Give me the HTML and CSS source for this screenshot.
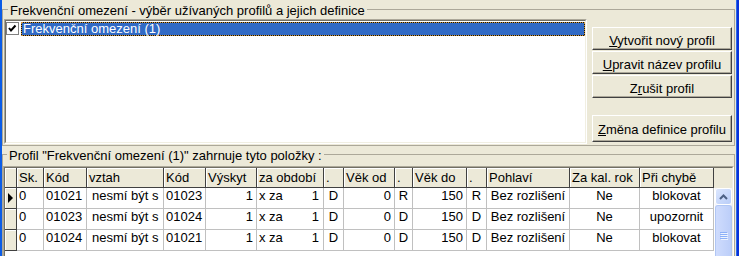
FILE: index.html
```html
<!DOCTYPE html>
<html lang="cs">
<head>
    <meta charset="UTF-8">
    <title>Frekvenční omezení</title>
    <link rel="stylesheet" href="styles.css">
</head>
<body>
    <div class="window">
        <div class="frame-left"></div>
        <div class="client">
            <fieldset class="group group-profiles">
                <legend>Frekvenční omezení - výběr užívaných profilů a jejich definice</legend>
                <div class="profiles-body">
                    <div class="listbox">
                        <div class="list-inner">
                            <div class="list-item">
                                <svg class="check" width="13" height="13" viewBox="0 0 13 13">
                                    <rect x="0.5" y="0.5" width="12" height="12" fill="#fff" stroke="#808080"/>
                                    <polyline points="3,6 5,8.5 9.5,3.5" fill="none" stroke="#000" stroke-width="2"/>
                                </svg>
                                <span class="item-text">Frekvenční omezení (1)</span>
                            </div>
                        </div>
                    </div>
                    <div class="actions">
                        <button class="btn"><u>V</u>ytvořit nový profil</button>
                        <button class="btn"><u>U</u>pravit název profilu</button>
                        <button class="btn">Z<u>r</u>ušit profil</button>
                        <button class="btn btn-last"><u>Z</u>měna definice profilu</button>
                    </div>
                </div>
            </fieldset>

            <fieldset class="group group-items">
                <legend>Profil "Frekvenční omezení (1)" zahrnuje tyto položky :</legend>
                <div class="grid">
                    <div class="grid-inner">
                        <div class="grid-head">
                            <div class="row">
                                <div class="cell hcell"></div>
                                <div class="cell hcell">Sk.</div>
                                <div class="cell hcell">Kód</div>
                                <div class="cell hcell">vztah</div>
                                <div class="cell hcell">Kód</div>
                                <div class="cell hcell">Výskyt</div>
                                <div class="cell hcell">za období</div>
                                <div class="cell hcell">.</div>
                                <div class="cell hcell">Věk od</div>
                                <div class="cell hcell">.</div>
                                <div class="cell hcell">Věk do</div>
                                <div class="cell hcell">.</div>
                                <div class="cell hcell">Pohlaví</div>
                                <div class="cell hcell">Za kal. rok</div>
                                <div class="cell hcell">Při chybě</div>
                            </div>
                            <div class="head-fill"></div>
                        </div>
                        <div class="grid-body">
                            <div class="rows">
                                <div class="row">
                                    <div class="cell indicator"><span class="arrow"></span></div>
                                    <div class="cell">0</div>
                                    <div class="cell">01021</div>
                                    <div class="cell pad">nesmí být s</div>
                                    <div class="cell">01023</div>
                                    <div class="cell right">1</div>
                                    <div class="cell split"><span>x za</span><span>1</span></div>
                                    <div class="cell center">D</div>
                                    <div class="cell right">0</div>
                                    <div class="cell center">R</div>
                                    <div class="cell right">150</div>
                                    <div class="cell center">R</div>
                                    <div class="cell center">Bez rozlišení</div>
                                    <div class="cell center">Ne</div>
                                    <div class="cell center">blokovat</div>
                                </div>
                                <div class="row">
                                    <div class="cell indicator"></div>
                                    <div class="cell">0</div>
                                    <div class="cell">01023</div>
                                    <div class="cell pad">nesmí být s</div>
                                    <div class="cell">01024</div>
                                    <div class="cell right">1</div>
                                    <div class="cell split"><span>x za</span><span>1</span></div>
                                    <div class="cell center">D</div>
                                    <div class="cell right">0</div>
                                    <div class="cell center">D</div>
                                    <div class="cell right">150</div>
                                    <div class="cell center">D</div>
                                    <div class="cell center">Bez rozlišení</div>
                                    <div class="cell center">Ne</div>
                                    <div class="cell center">upozornit</div>
                                </div>
                                <div class="row">
                                    <div class="cell indicator"></div>
                                    <div class="cell">0</div>
                                    <div class="cell">01024</div>
                                    <div class="cell pad">nesmí být s</div>
                                    <div class="cell">01021</div>
                                    <div class="cell right">1</div>
                                    <div class="cell split"><span>x za</span><span>1</span></div>
                                    <div class="cell center">D</div>
                                    <div class="cell right">0</div>
                                    <div class="cell center">D</div>
                                    <div class="cell right">150</div>
                                    <div class="cell center">D</div>
                                    <div class="cell center">Bez rozlišení</div>
                                    <div class="cell center">Ne</div>
                                    <div class="cell center">blokovat</div>
                                </div>
                            </div>
                            <div class="vscroll">
                                <div class="sb-up">
                                    <svg width="9" height="6" viewBox="0 0 9 6"><polyline points="1,5 4.5,1.5 8,5" fill="none" stroke="#4d6185" stroke-width="2"/></svg>
                                </div>
                                <div class="sb-thumb">
                                    <svg width="8" height="8" viewBox="0 0 8 8">
                                        <path d="M0 0.5h7M0 2.5h7M0 4.5h7M0 6.5h7" stroke="#8cb0f8"/>
                                        <path d="M1 1.5h7M1 3.5h7M1 5.5h7M1 7.5h7" stroke="#eef4fe"/>
                                    </svg>
                                </div>
                            </div>
                        </div>
                    </div>
                </div>
            </fieldset>
        </div>
        <div class="frame-right"></div>
    </div>
</body>
</html>
```

FILE: styles.css
```css
body {
    margin: 0;
    width: 739px;
    height: 256px;
    overflow: hidden;
    background-color: #ece9d8;
    font-family: "Liberation Sans", Arial, sans-serif;
    font-size: 13px;
    color: #000;
}
.window {
    display: flex;
    height: 256px;
}
.frame-left {
    width: 2px;
    flex: none;
    background-color: #0b5ce6;
}
.frame-right {
    width: 3px;
    flex: none;
    background: linear-gradient(90deg, #2a6ae8 1px, #0831d9 1px);
}
.client {
    flex: 1;
    min-width: 0;
    padding: 1px 1px 0 0;
}

/* group boxes */
.group {
    margin: 0;
    padding: 0 1px 1px 1px;
    border: 1px solid #aca899;
    min-width: 0;
}
.group legend {
    margin-left: 4px;
    padding: 2px 2px 0;
    line-height: 15px;
}
.group-items {
    padding: 0;
    border-bottom: none;
}

/* profiles list + buttons */
.profiles-body {
    display: flex;
    padding-top: 1px;
}
.listbox {
    flex: 1;
    height: 125px;
    box-sizing: border-box;
    border: 1px solid;
    border-color: #aca899 #fff #fff #aca899;
    background-color: #fff;
}
.list-inner {
    height: 100%;
    box-sizing: border-box;
    border: 1px solid;
    border-color: #716f64 #f1efe2 #f1efe2 #716f64;
    padding-top: 1px;
}
.list-item {
    display: flex;
    gap: 2px;
}
.check {
    flex: none;
    display: block;
}
.item-text {
    flex: 1;
    height: 14px;
    box-sizing: border-box;
    border: 1px dotted #ce953a;
    background: linear-gradient(#316ac5, #316ac5) padding-box, #111;
    color: #fff;
    line-height: 12px;
    padding-left: 1px;
    white-space: nowrap;
}
.actions {
    width: 140px;
    flex: none;
    margin: 0 1px 0 5px;
    padding-top: 8px;
    display: flex;
    flex-direction: column;
    gap: 1px;
}
.btn {
    font: inherit;
    color: #000;
    background-color: #ece9d8;
    border: 1px solid;
    border-color: #fff #404040 #404040 #fff;
    box-shadow: inset -1px -1px 0 #aca899;
    padding: 4px 0 0;
    line-height: 17px;
    text-align: center;
    white-space: nowrap;
}
.btn-last {
    margin-top: 16px;
    padding: 5px 0 3px;
}

/* data grid */
.grid {
    margin-top: 3px;
    height: 90px;
    box-sizing: border-box;
    border: 1px solid;
    border-bottom: none;
    border-color: #aca899 #fff #fff #aca899;
    display: flex;
}
.grid-inner {
    flex: 1;
    display: flex;
    flex-direction: column;
    border: 1px solid;
    border-bottom: none;
    border-color: #716f64 #f1efe2 #f1efe2 #716f64;
    background-color: #fff;
}
.grid-head {
    display: flex;
    background-color: #ece9d8;
}
.head-fill {
    flex: 1;
}
.grid-body {
    flex: 1;
    display: flex;
    min-height: 0;
}
.rows {
    flex: 1;
}
.row {
    display: grid;
    grid-template-columns: 12px 27px 43px 77px 42px 51px 67px 20px 51px 18px 54px 20px 83px 70px 74px;
}
.cell {
    box-sizing: border-box;
    height: 21px;
    line-height: 15px;
    padding: 0 2px;
    border-right: 1px solid #c0c0c0;
    border-bottom: 1px solid #c0c0c0;
    white-space: nowrap;
    overflow: hidden;
}
.hcell {
    height: 20px;
    line-height: 19px;
    background-color: #ece9d8;
    border-color: #404040;
    box-shadow: inset 1px 1px 0 #fff;
}
.indicator {
    background-color: #ece9d8;
    border-color: #404040;
    box-shadow: inset 1px 1px 0 #fff;
    display: flex;
    align-items: center;
    justify-content: center;
    padding: 0;
}
.arrow {
    width: 0;
    height: 0;
    border-left: 5px solid #000;
    border-top: 5px solid transparent;
    border-bottom: 5px solid transparent;
}
.pad { padding-left: 5px; }
.right { text-align: right; padding-right: 3px; }
.center { text-align: center; }
.split {
    display: flex;
    justify-content: space-between;
    padding-right: 4px;
}

/* scrollbar */
.vscroll {
    width: 17px;
    flex: none;
    display: flex;
    flex-direction: column;
    background-color: #f3f4fb;
}
.sb-up {
    height: 17px;
    flex: none;
    box-sizing: border-box;
    border: 1px solid #fff;
    border-radius: 3px;
    background: linear-gradient(135deg, #dbe6fe, #b9cdf8);
    display: flex;
    align-items: center;
    justify-content: center;
}
.sb-thumb {
    flex: 1;
    box-sizing: border-box;
    border: 1px solid #b0c6f4;
    border-bottom: none;
    border-radius: 3px 3px 0 0;
    background: linear-gradient(90deg, #cfdcfd, #bccef9);
    display: flex;
    justify-content: center;
    padding-top: 26px;
}
```
